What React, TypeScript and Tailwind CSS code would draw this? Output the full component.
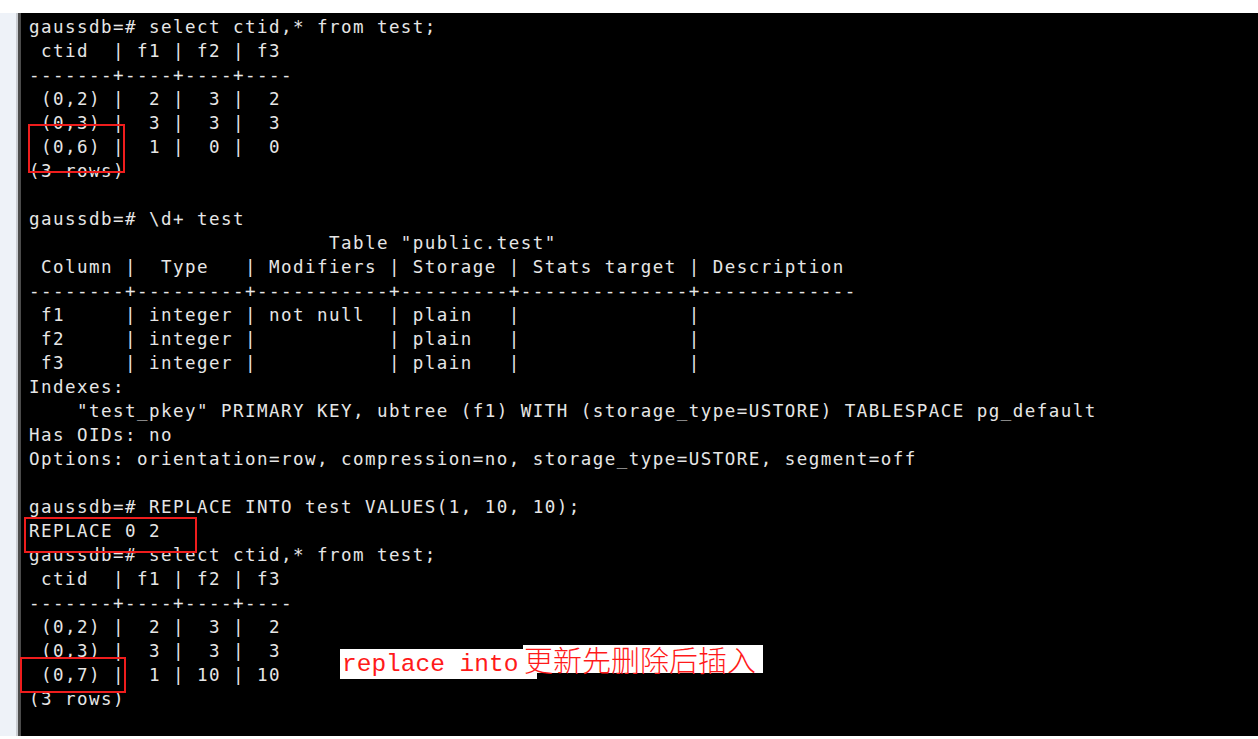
const lines: string[] = [
  "gaussdb=# select ctid,* from test;",
  " ctid  | f1 | f2 | f3",
  "-------+----+----+----",
  " (0,2) |  2 |  3 |  2",
  " (0,3) |  3 |  3 |  3",
  " (0,6) |  1 |  0 |  0",
  "(3 rows)",
  "",
  "gaussdb=# \\d+ test",
  "                         Table \"public.test\"",
  " Column |  Type   | Modifiers | Storage | Stats target | Description",
  "--------+---------+-----------+---------+--------------+-------------",
  " f1     | integer | not null  | plain   |              |",
  " f2     | integer |           | plain   |              |",
  " f3     | integer |           | plain   |              |",
  "Indexes:",
  "    \"test_pkey\" PRIMARY KEY, ubtree (f1) WITH (storage_type=USTORE) TABLESPACE pg_default",
  "Has OIDs: no",
  "Options: orientation=row, compression=no, storage_type=USTORE, segment=off",
  "",
  "gaussdb=# REPLACE INTO test VALUES(1, 10, 10);",
  "REPLACE 0 2",
  "gaussdb=# select ctid,* from test;",
  " ctid  | f1 | f2 | f3",
  "-------+----+----+----",
  " (0,2) |  2 |  3 |  2",
  " (0,3) |  3 |  3 |  3",
  " (0,7) |  1 | 10 | 10",
  "(3 rows)",
  "",
];

// red highlight boxes drawn over the screenshot
const marks = [
  "left-[28px] top-[124px] w-[97px] h-[49px]",
  "left-[24px] top-[517px] w-[173px] h-[36px]",
  "left-[20px] top-[657px] w-[106px] h-[36px]",
];

export default function App() {
  return (
    <div className="relative w-[1258px] h-[739px] bg-white overflow-hidden">
      <div className="flex h-[723px] mt-[13px]">
        {/* window chrome on the left */}
        <div className="w-[16px] bg-[#eef2f8]" />
        <div className="w-[2px] bg-[#c9ccd1]" />
        <div className="w-[3px] bg-[#4b4b4b]" />
        {/* terminal */}
        <div className="flex-1 bg-black overflow-hidden pl-[8px] pt-[2px]">
          <div className="font-['DejaVu_Sans_Mono',monospace] text-[17.5px] tracking-[1.46px] text-[#e6e6e6]">
            {lines.map((l, i) => (
              <div key={i} className="h-[24px] leading-[24px] whitespace-pre">
                {l}
              </div>
            ))}
          </div>
        </div>
      </div>

      {marks.map((m, i) => (
        <div key={i} className={`absolute border-2 border-[#ef1d1d] ${m}`} />
      ))}

      {/* annotation */}
      <div className="absolute left-[340px] top-[649px] w-[197px] h-[30px] bg-white" />
      <div className="absolute left-[523px] top-[645px] w-[240px] h-[28px] bg-white" />
      <div className="absolute left-[342px] top-[650px] h-[30px] flex items-center font-['Liberation_Mono',monospace] text-[24.5px] leading-none text-[#ff1a1a] whitespace-pre">
        replace into
      </div>
      <div className="absolute left-[524px] top-[645px] h-[28px] flex items-center font-['Noto_Sans_CJK_SC',sans-serif] text-[29px] font-light leading-none text-[#ff1a1a] whitespace-pre">
        更新先删除后插入
      </div>
    </div>
  );
}
